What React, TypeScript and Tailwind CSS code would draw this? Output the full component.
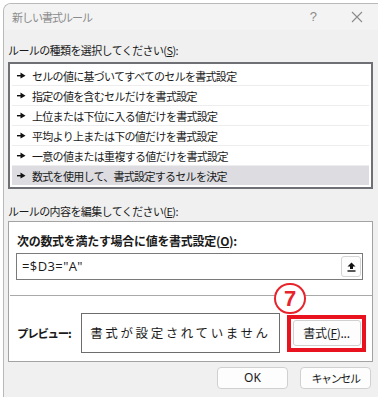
import React from "react";

const jp = { fontFamily: '"Noto Sans CJK JP", "Noto Sans", sans-serif' };

const rules = [
  "セルの値に基づいてすべてのセルを書式設定",
  "指定の値を含むセルだけを書式設定",
  "上位または下位に入る値だけを書式設定",
  "平均より上または下の値だけを書式設定",
  "一意の値または重複する値だけを書式設定",
  "数式を使用して、書式設定するセルを決定",
];

function Pointer() {
  return (
    <svg width="9" height="7" viewBox="0 0 9 7" className="shrink-0">
      <rect x="0" y="3" width="4" height="1.4" fill="#111" />
      <path d="M3.5 0.5 L8.5 3.7 L3.5 6.5 Z" fill="#111" />
    </svg>
  );
}

export default function App() {
  return (
    <div className="w-[378px] h-[397px] overflow-hidden bg-white text-[#1a1a1a]" style={jp}>
      <div className="ml-[3px] mt-[3px] w-[390px] h-[400px] rounded-tl-lg border-l border-t border-[#b9b9b9] bg-[#f0f0f0] overflow-hidden">
        {/* title bar */}
        <div className="h-[26px] flex items-center bg-[#f3f3f3] pl-[8px] pr-[30px] text-[11px] leading-[14px] text-[#8b8b8b]">
          <span className="flex-1 tracking-[-1px]">新しい書式ルール</span>
          <span className="text-[13px]" style={{ fontFamily: '"Liberation Sans", sans-serif' }}>?</span>
          <svg width="12" height="12" viewBox="0 0 12 12" className="ml-[34px]">
            <path d="M1 1 L11 11 M11 1 L1 11" stroke="#8b8b8b" strokeWidth="1.1" />
          </svg>
        </div>

        <div className="pl-[4px]">
          <div className="pt-[13px] h-[27px] text-[11px] leading-[14px] tracking-[-0.6px]">
            ルールの種類を選択してください(<span className="underline">S</span>):
          </div>

          <div className="mt-[5px] w-[365px] h-[127px] border-2 border-[#6f6f76] bg-white p-[2px] flex flex-col gap-px">
            {rules.map((r, i) => (
              <div
                key={r}
                className={`h-[19px] flex items-center pl-[5px] gap-[6px] text-[11px] tracking-[-0.7px] ${
                  i === 5 ? "bg-[#dcdce1]" : "bg-white"
                } ${i < 5 ? "shadow-[0_1px_0_#ededed]" : ""}`}
              >
                <Pointer />
                <span className="leading-[14px]">{r}</span>
              </div>
            ))}
          </div>

          <div className="mt-[15px] h-[14px] text-[11px] leading-[14px] tracking-[-0.6px]">
            ルールの内容を編集してください(<span className="underline">E</span>):
          </div>

          <div className="relative mt-[3px] w-[365px] h-[141px] border border-[#a3a3a3] bg-white">
            <div className="pt-[12px] pl-[8px] h-[26px] text-[12px] leading-[14px] font-bold tracking-[-0.3px]">
              次の数式を満たす場合に値を書式設定(<span className="underline">O</span>):
            </div>
            <div className="mt-[5px] ml-[7px] w-[347px] h-[27px] border border-[#7a7a7a] flex items-center justify-between pl-[5px] pr-[1px]">
              <span className="text-[13px] tracking-[0.4px]" style={{ fontFamily: '"Open Sans", "Noto Sans", sans-serif' }}>
                =$D3="A"
              </span>
              <div className="w-[20px] h-[21px] rounded-[3px] border border-[#d4d4d4] bg-[#fdfdfd] flex items-center justify-center">
                <svg width="9" height="10" viewBox="0 0 9 10">
                  <path d="M4.5 0.5 L8.5 4.5 L6 4.5 L6 7 L3 7 L3 4.5 L0.5 4.5 Z" fill="#111" />
                  <rect x="0.5" y="8.3" width="8" height="1.4" fill="#111" />
                </svg>
              </div>
            </div>

            <div className="mt-[15px] ml-[1px] h-px bg-[#a9a9a9]" />

            <div className="mt-[17px] h-[40px] flex items-center">
              <span className="pl-[8px] w-[72px] text-[11.5px] font-bold tracking-[-1.3px] leading-[14px]">プレビュー:</span>
              <div className="w-[199px] h-[40px] border border-[#6d6d6d] flex items-center justify-center text-[12.5px] tracking-[2.6px]">
                書式が設定されていません
              </div>
              <div className="ml-[7px] w-[79px] h-[37px] border-[4px] border-[#e8131f] flex items-center justify-center">
                <div className="w-[68px] h-[26px] rounded-[3px] border border-[#d0d0d0] bg-[#fdfdfd] flex items-center justify-center text-[12px] tracking-[-0.3px]">
                  書式(<span className="underline">F</span>)...
                </div>
              </div>
            </div>

            {/* annotation marker */}
            <div className="absolute left-[265px] top-[61px] w-[32px] h-[31px] rounded-full border-[2.5px] border-[#e8232b] bg-white flex items-center justify-center">
              <span className="text-[22px] leading-none font-bold text-[#e8232b]" style={{ fontFamily: '"Liberation Sans", sans-serif' }}>
                7
              </span>
            </div>
          </div>

          <div className="mt-[5px] flex">
            <div className="ml-[209px] w-[71px] h-[22px] rounded-[4px] border border-[#d0d0d0] bg-[#fdfdfd] flex items-center justify-center text-[12px]" style={{ fontFamily: '"Noto Sans", sans-serif' }}>
              OK
            </div>
            <div className="ml-[12px] w-[71px] h-[22px] rounded-[4px] border border-[#d0d0d0] bg-[#fdfdfd] flex items-center justify-center text-[11px] tracking-[-1.4px]">
              キャンセル
            </div>
          </div>
        </div>
      </div>
    </div>
  );
}
